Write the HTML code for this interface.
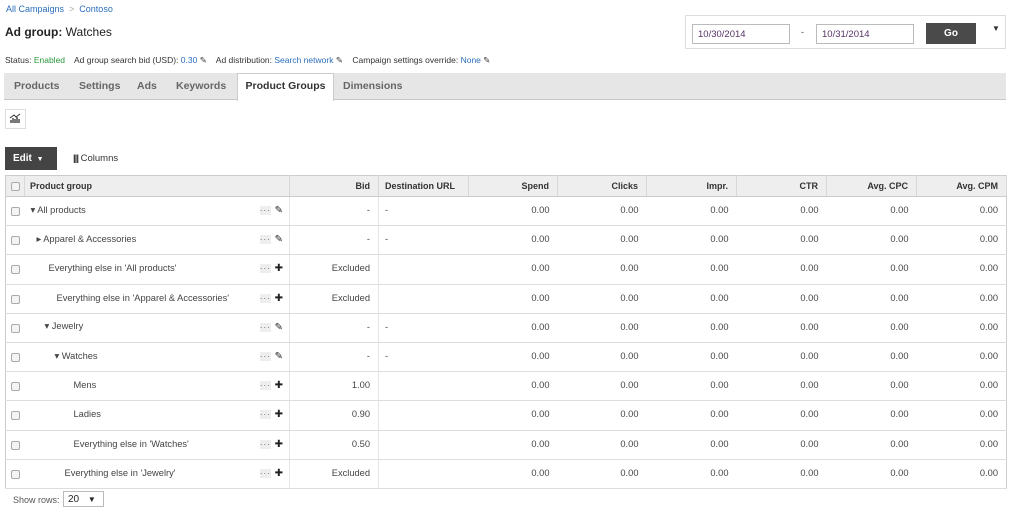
<!DOCTYPE html>
<html><head><style>
*{margin:0;padding:0;box-sizing:border-box}
body{width:1024px;height:511px;background:#fff;font-family:"Liberation Sans",Arial,sans-serif;font-size:9px;color:#444;position:relative;overflow:hidden}
.a{position:absolute}
.blue{color:#2a6ebb}
table{position:absolute;left:5px;top:175px;width:1001px;border-collapse:collapse;border:1px solid #ccc;table-layout:fixed}
th{background:#eee;height:21px;font-weight:bold;color:#333;font-size:9px;border-right:1px solid #d8d8d8;border-bottom:1px solid #ccc;text-align:right;padding-right:8px}
td{height:29.2px;border-bottom:1px solid #ddd;text-align:right;padding-right:8px;color:#444;font-size:9.3px;padding-bottom:2px}
td.pg{text-align:left;position:relative;border-right:1px solid #e4e4e4}
td.bid{border-right:1px solid #e4e4e4}
td.dst{text-align:left;padding-left:6px}
.cb{display:inline-block;width:9px;height:9px;border:1px solid #aaa;border-radius:2px;background:#f4f4f4;vertical-align:middle}
.ic{position:absolute;right:5px;top:8px;font-size:10px;color:#222;letter-spacing:1px}
.dots{font-size:8px;color:#555;background:#eee}
.tab{position:absolute;top:80px;font-size:10.5px;font-weight:bold;color:#666}
</style></head><body>
<div class="a blue" style="left:6px;top:4px">All Campaigns <span style="color:#aaa">&nbsp;&gt;&nbsp;</span> Contoso</div>
<div class="a" style="left:5px;top:25px;font-size:12px;color:#222"><b>Ad group:</b> Watches</div>
<div class="a" style="left:5px;top:55px;font-size:8.5px;color:#333">Status: <span style="color:#2a9a3a">Enabled</span> &nbsp;&nbsp; Ad group search bid (USD): <span class="blue">0.30</span> ✎ &nbsp;&nbsp; Ad distribution: <span class="blue">Search network</span> ✎ &nbsp;&nbsp; Campaign settings override: <span class="blue">None</span> ✎</div>
<div class="a" style="left:4px;top:73px;width:1002px;height:27px;background:#e6e6e6;border-bottom:1px solid #c8c8c8"></div>
<span class="tab" style="left:14px">Products</span><span class="tab" style="left:79px">Settings</span><span class="tab" style="left:137px">Ads</span><span class="tab" style="left:176px">Keywords</span><span class="tab" style="left:343px">Dimensions</span>
<div class="a" style="left:237px;top:73px;width:97px;height:28px;background:#fff;border:1px solid #ccc;border-bottom:none;font-size:10.5px;font-weight:bold;color:#333;text-align:center;line-height:25px">Product Groups</div>
<div class="a" style="left:5px;top:109px;width:21px;height:20px;border:1px solid #ddd">
<svg width="19" height="18" viewBox="0 0 19 18"><path d="M5 13V10M7 13V8M9 13V9M11 13V7M13 13V9" stroke="#333" stroke-width="1.3"/><path d="M4 8L8 5L10 7L14 4" stroke="#333" fill="none" stroke-width="1"/></svg></div>
<div class="a" style="left:5px;top:147px;width:52px;height:23px;background:#444;color:#fff;font-weight:bold;font-size:10px;line-height:23px;padding-left:8px">Edit <span style="font-size:7px;margin-left:2px">▼</span></div>
<div class="a" style="left:73px;top:153px;font-size:9.5px;color:#333"><b style="letter-spacing:-1px">|||</b> Columns</div>
<div class="a" style="left:685px;top:15px;width:321px;height:34px;border:1px solid #ddd"></div>
<div class="a" style="left:692px;top:24px;width:98px;height:20px;border:1px solid #bbb;color:#536;font-size:9.5px;padding:4px 5px">10/30/2014</div>
<div class="a" style="left:801px;top:27px">-</div>
<div class="a" style="left:816px;top:24px;width:98px;height:20px;border:1px solid #bbb;color:#536;font-size:9.5px;padding:4px 5px">10/31/2014</div>
<div class="a" style="left:926px;top:23px;width:50px;height:21px;background:#4a4a4a;color:#fff;font-weight:bold;font-size:10px;text-align:center;line-height:21px">Go</div>
<div class="a" style="left:992px;top:24px;font-size:8px;color:#333">▼</div>
<table>
<colgroup><col style="width:19px"><col style="width:265px"><col style="width:89px"><col style="width:90px"><col style="width:89px"><col style="width:89px"><col style="width:90px"><col style="width:90px"><col style="width:90px"><col style="width:90px"></colgroup>
<tr><th style="text-align:center;padding:0"><span class="cb"></span></th><th style="text-align:left;padding-left:5px">Product group</th><th>Bid</th><th style="text-align:left;padding-left:6px">Destination URL</th><th>Spend</th><th>Clicks</th><th>Impr.</th><th>CTR</th><th>Avg. CPC</th><th>Avg. CPM</th></tr>
<tr><td style="text-align:center;padding:0"><span class="cb"></span></td><td class="pg" style="padding-left:6px">▾ All products<span class="ic"><span class="dots">···</span> ✎</span></td><td class="bid">-</td><td class="dst">-</td><td>0.00</td><td>0.00</td><td>0.00</td><td>0.00</td><td>0.00</td><td>0.00</td></tr>
<tr><td style="text-align:center;padding:0"><span class="cb"></span></td><td class="pg" style="padding-left:12px">▸ Apparel &amp; Accessories<span class="ic"><span class="dots">···</span> ✎</span></td><td class="bid">-</td><td class="dst">-</td><td>0.00</td><td>0.00</td><td>0.00</td><td>0.00</td><td>0.00</td><td>0.00</td></tr>
<tr><td style="text-align:center;padding:0"><span class="cb"></span></td><td class="pg" style="padding-left:24px">Everything else in 'All products'<span class="ic"><span class="dots">···</span> ✚</span></td><td class="bid">Excluded</td><td class="dst"></td><td>0.00</td><td>0.00</td><td>0.00</td><td>0.00</td><td>0.00</td><td>0.00</td></tr>
<tr><td style="text-align:center;padding:0"><span class="cb"></span></td><td class="pg" style="padding-left:32px">Everything else in 'Apparel &amp; Accessories'<span class="ic"><span class="dots">···</span> ✚</span></td><td class="bid">Excluded</td><td class="dst"></td><td>0.00</td><td>0.00</td><td>0.00</td><td>0.00</td><td>0.00</td><td>0.00</td></tr>
<tr><td style="text-align:center;padding:0"><span class="cb"></span></td><td class="pg" style="padding-left:20px">▾ Jewelry<span class="ic"><span class="dots">···</span> ✎</span></td><td class="bid">-</td><td class="dst">-</td><td>0.00</td><td>0.00</td><td>0.00</td><td>0.00</td><td>0.00</td><td>0.00</td></tr>
<tr><td style="text-align:center;padding:0"><span class="cb"></span></td><td class="pg" style="padding-left:30px">▾ Watches<span class="ic"><span class="dots">···</span> ✎</span></td><td class="bid">-</td><td class="dst">-</td><td>0.00</td><td>0.00</td><td>0.00</td><td>0.00</td><td>0.00</td><td>0.00</td></tr>
<tr><td style="text-align:center;padding:0"><span class="cb"></span></td><td class="pg" style="padding-left:49px">Mens<span class="ic"><span class="dots">···</span> ✚</span></td><td class="bid">1.00</td><td class="dst"></td><td>0.00</td><td>0.00</td><td>0.00</td><td>0.00</td><td>0.00</td><td>0.00</td></tr>
<tr><td style="text-align:center;padding:0"><span class="cb"></span></td><td class="pg" style="padding-left:49px">Ladies<span class="ic"><span class="dots">···</span> ✚</span></td><td class="bid">0.90</td><td class="dst"></td><td>0.00</td><td>0.00</td><td>0.00</td><td>0.00</td><td>0.00</td><td>0.00</td></tr>
<tr><td style="text-align:center;padding:0"><span class="cb"></span></td><td class="pg" style="padding-left:49px">Everything else in 'Watches'<span class="ic"><span class="dots">···</span> ✚</span></td><td class="bid">0.50</td><td class="dst"></td><td>0.00</td><td>0.00</td><td>0.00</td><td>0.00</td><td>0.00</td><td>0.00</td></tr>
<tr><td style="text-align:center;padding:0"><span class="cb"></span></td><td class="pg" style="padding-left:40px">Everything else in 'Jewelry'<span class="ic"><span class="dots">···</span> ✚</span></td><td class="bid">Excluded</td><td class="dst"></td><td>0.00</td><td>0.00</td><td>0.00</td><td>0.00</td><td>0.00</td><td>0.00</td></tr>
</table>
<div class="a" style="left:13px;top:495px;color:#555">Show rows:</div>
<div class="a" style="left:63px;top:491px;width:41px;height:16px;border:1px solid #bbb;font-size:10px;color:#222;padding:2px 4px">20 <span style="font-size:8px;margin-left:6px">▼</span></div>
</body></html>
